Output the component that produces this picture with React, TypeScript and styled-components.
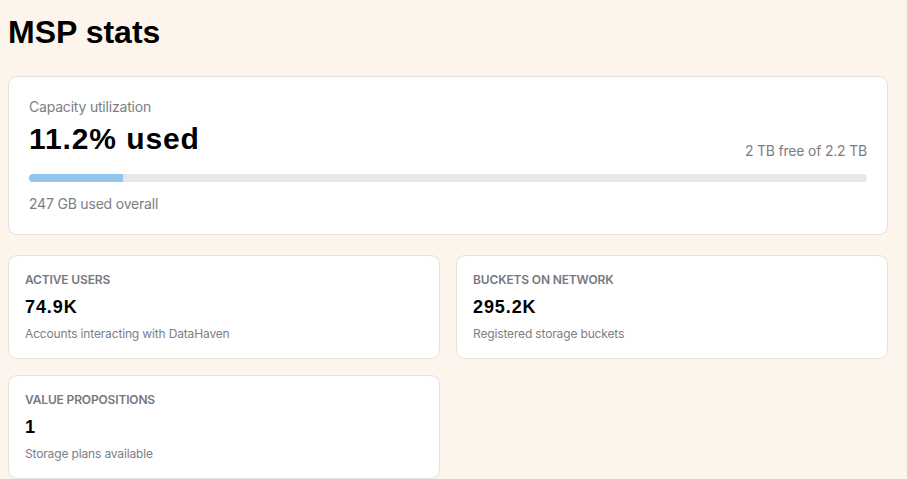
import React from "react";
import styled, { createGlobalStyle } from "styled-components";

const GlobalStyle = createGlobalStyle`
  html, body {
    margin: 0;
    padding: 0;
    background: #fdf4ec;
  }
  body {
    font-family: Inter, "Noto Sans", sans-serif;
    line-height: 1.5;
    color: #0a0a0a;
  }
  * { box-sizing: border-box; }
`;

const Page = styled.main`
  padding: 8px 19px 0 8px;
  display: flex;
  flex-direction: column;
`;

const Title = styled.h1`
  margin: 0 0 20px;
  font-family: "Liberation Sans", Arial, sans-serif;
  font-size: 32px;
  font-weight: 700;
  line-height: 48px;
  color: #000;
`;

const Card = styled.section<{ $pad: string }>`
  background: #ffffff;
  border: 1px solid #e4e2df;
  border-radius: 9px;
  padding: ${(p) => p.$pad};
`;

const CapacityCard = styled(Card)`
  display: flex;
  flex-direction: column;
  margin-bottom: 20px;
`;

const Muted = styled.div`
  font-size: 14px;
  line-height: 20px;
  letter-spacing: -0.2px;
  color: #7b7e85;
`;

const HeadRow = styled.div`
  display: flex;
  justify-content: space-between;
  align-items: flex-end;
`;

const BigValue = styled.div`
  font-family: "Liberation Sans", Arial, sans-serif;
  font-size: 30px;
  font-weight: 700;
  line-height: 44px;
  letter-spacing: 0.9px;
  color: #000;
`;

const Track = styled.div`
  margin: 13px 0 12px;
  height: 8px;
  border-radius: 4px;
  background: #e7e7ea;
  overflow: hidden;
`;

const Fill = styled.div`
  height: 100%;
  background: #92c5ee;
`;

const Grid = styled.div`
  display: grid;
  grid-template-columns: 1fr 1fr;
  gap: 16px;
`;

const StatLabel = styled.div`
  font-size: 12px;
  line-height: 16px;
  font-weight: 600;
  letter-spacing: -0.15px;
  text-transform: uppercase;
  color: #75787f;
`;

const StatValue = styled.div`
  margin-top: 5px;
  font-family: "Liberation Sans", Arial, sans-serif;
  font-size: 18px;
  font-weight: 700;
  line-height: 28px;
  letter-spacing: 0.9px;
  color: #000;
`;

const StatNote = styled.div`
  margin-top: 5px;
  font-size: 12px;
  line-height: 16px;
  letter-spacing: -0.15px;
  color: #7b7e85;
`;

type Stat = { label: string; value: string; note: string };

const stats: Stat[] = [
  { label: "Active users", value: "74.9K", note: "Accounts interacting with DataHaven" },
  { label: "Buckets on network", value: "295.2K", note: "Registered storage buckets" },
  { label: "Value propositions", value: "1", note: "Storage plans available" },
];

const usedPct = 11.2;

export default function App() {
  return (
    <>
      <GlobalStyle />
      <Page>
        <Title>MSP stats</Title>
        <CapacityCard $pad="20px">
          <HeadRow>
            <div>
              <Muted>Capacity utilization</Muted>
              <BigValue>{usedPct}% used</BigValue>
            </div>
            <Muted>2 TB free of 2.2 TB</Muted>
          </HeadRow>
          <Track>
            <Fill style={{ width: `${usedPct}%` }} />
          </Track>
          <Muted>247 GB used overall</Muted>
        </CapacityCard>
        <Grid>
          {stats.map((s) => (
            <Card $pad="16px" key={s.label}>
              <StatLabel>{s.label}</StatLabel>
              <StatValue>{s.value}</StatValue>
              <StatNote>{s.note}</StatNote>
            </Card>
          ))}
        </Grid>
      </Page>
    </>
  );
}
